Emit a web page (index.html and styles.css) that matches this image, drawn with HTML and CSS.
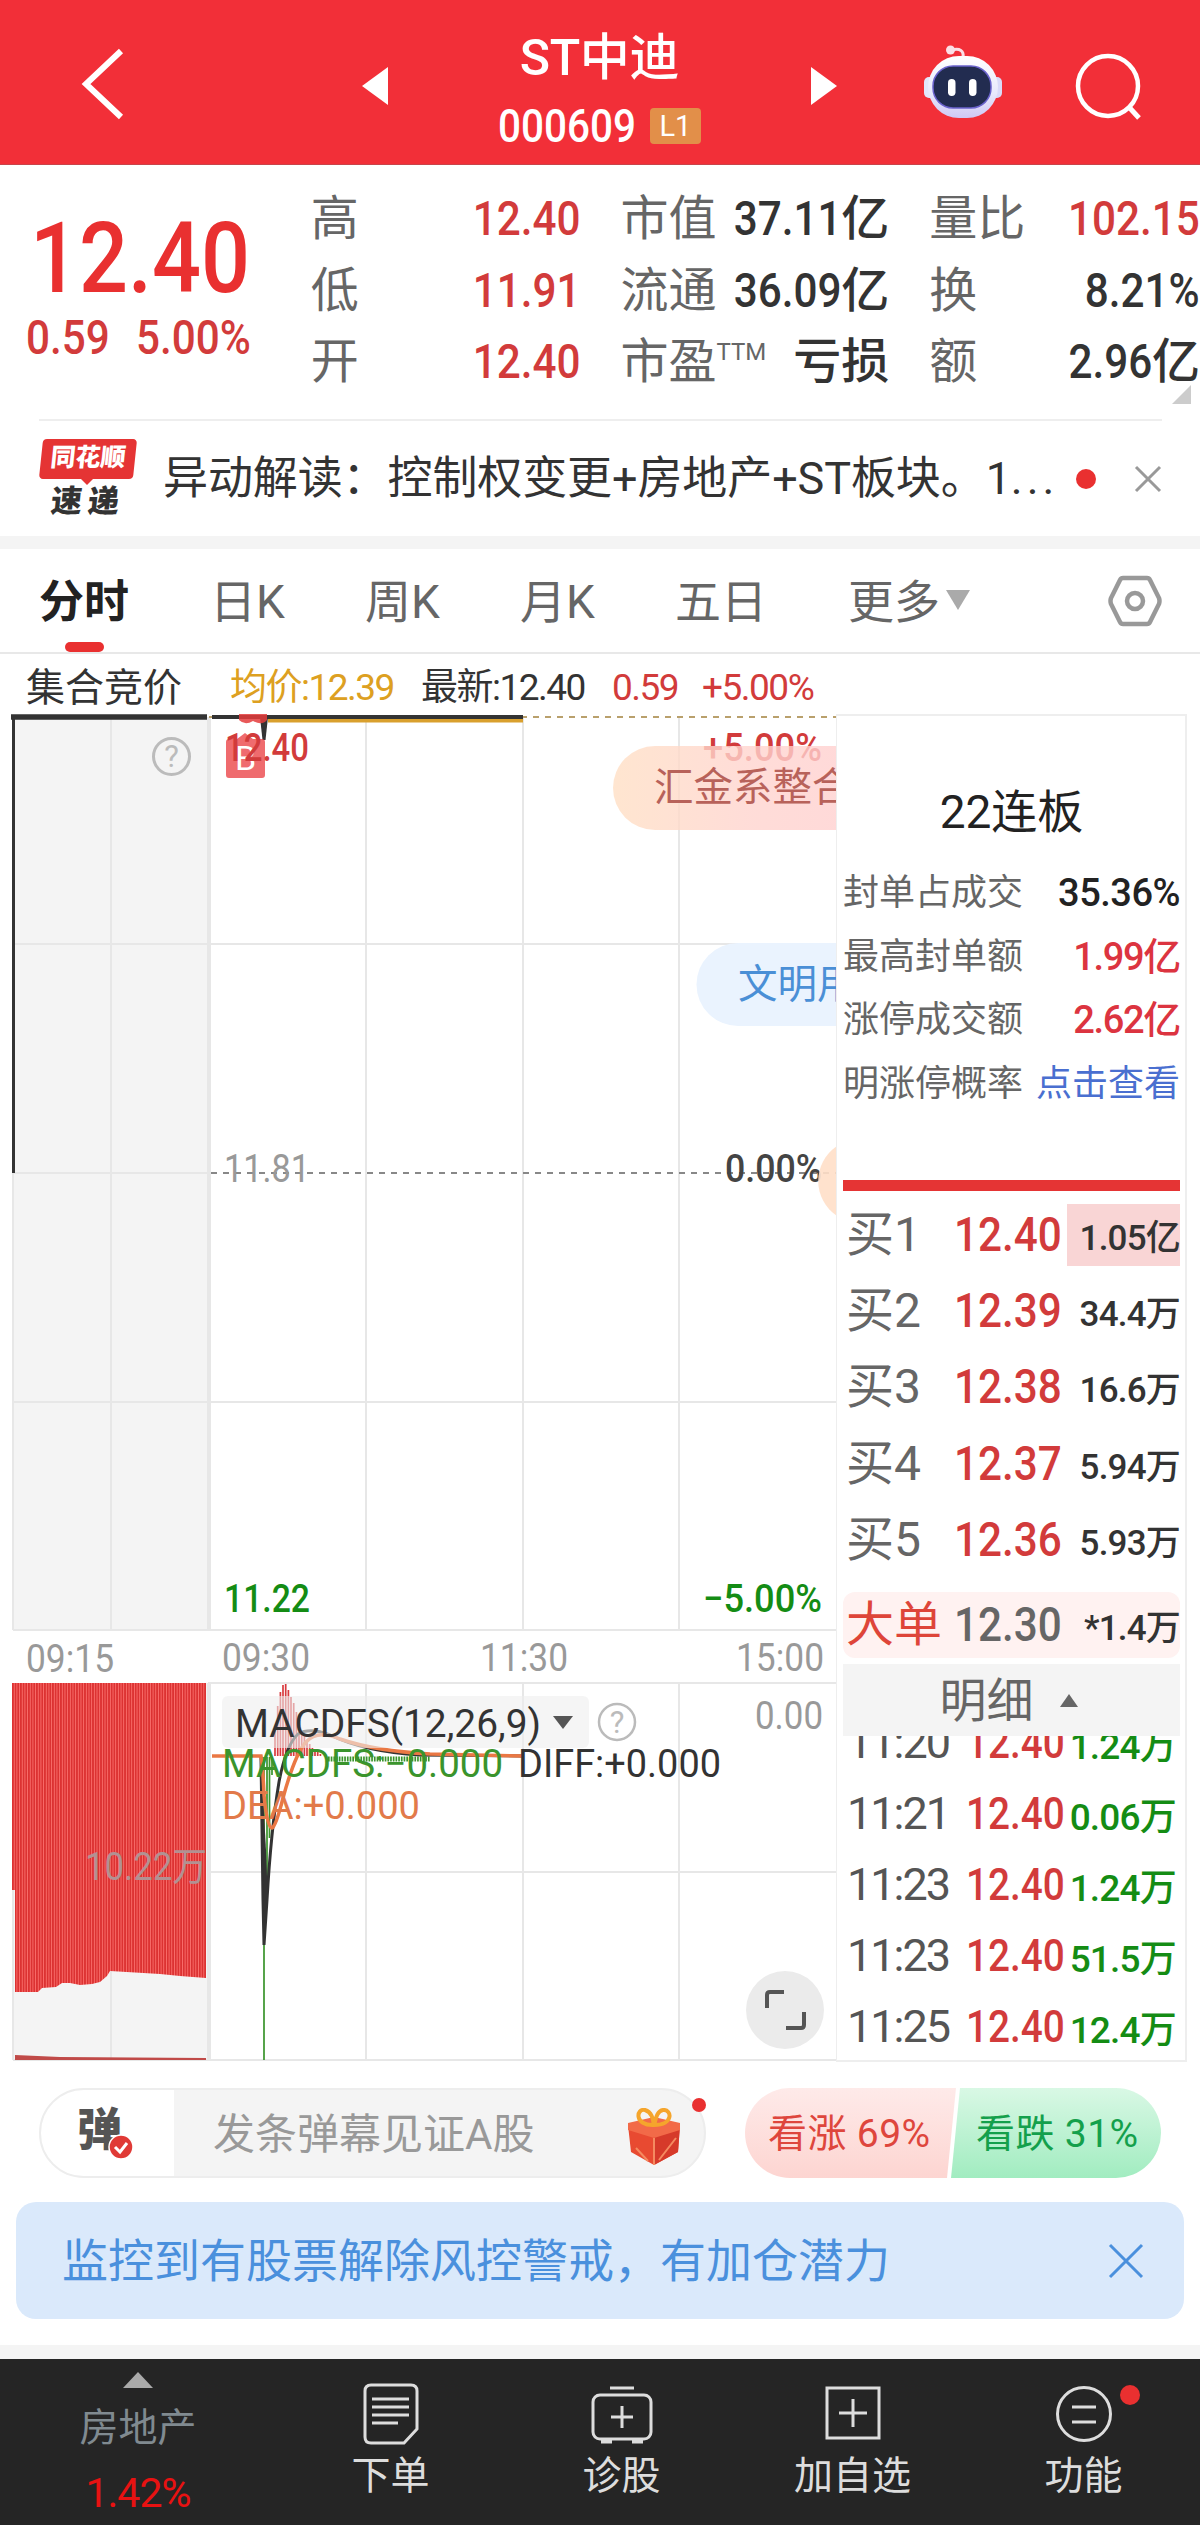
FILE: index.html
```
<!DOCTYPE html>
<html lang="zh-CN">
<head>
  <meta charset="UTF-8">
  <title>ST中迪 000609</title>
  <link rel="stylesheet" href="styles.css">
</head>
<body>
  <header class="top">
    <svg class="back" width="50" height="76" viewBox="0 0 50 76"><path d="M42 5 L7 38 L42 71" fill="none" stroke="#fff" stroke-width="6"/></svg>
    <svg class="prev" width="26" height="38" viewBox="0 0 26 38"><path d="M26 0 V38 L0 19Z" fill="#fff"/></svg>
    <div class="title">
      <div class="name">ST中迪</div>
      <div class="code"><span class="num">000609</span><span class="badge">L1</span></div>
    </div>
    <svg class="next" width="26" height="38" viewBox="0 0 26 38"><path d="M0 0 V38 L26 19Z" fill="#fff"/></svg>
    <svg class="robot" width="80" height="78" viewBox="0 0 80 78">
      <defs>
        <linearGradient id="head" x1="0" y1="0" x2="0" y2="1"><stop offset="0" stop-color="#fff"/><stop offset=".6" stop-color="#e8e9fb"/><stop offset="1" stop-color="#cfc8f5"/></linearGradient>
      </defs>
      <path d="M39 15 C40 9 36 6 28 8" fill="none" stroke="#fbdfe6" stroke-width="3"/>
      <circle cx="26.500" cy="8" r="4.500" fill="#fbdfe6"/>
      <rect x="0" y="35" width="12" height="21" rx="5" fill="#e2e6fb"/>
      <rect x="66" y="35" width="12" height="21" rx="5" fill="#d9dbf8"/>
      <rect x="4" y="14" width="70" height="62" rx="31" fill="url(#head)"/>
      <rect x="9" y="24" width="58" height="42" rx="20" fill="#222c50" stroke="#6a62cc" stroke-width="1.500"/>
      <rect x="24" y="37" width="7.500" height="17" rx="3.700" fill="#fff"/>
      <rect x="45" y="37" width="7.500" height="17" rx="3.700" fill="#fff"/>
    </svg>
    <svg class="search" width="70" height="70" viewBox="0 0 70 70"><circle cx="34" cy="34" r="30" fill="none" stroke="#fff" stroke-width="4.500"/><path d="M54 54 L65 66" stroke="#fff" stroke-width="5"/></svg>
  </header>

  <section class="quote">
    <div class="price">
      <div class="last num">12.40</div>
      <div class="change"><span class="num">0.59</span><span class="num">5.00%</span></div>
    </div>
    <dl class="stats col1">
      <div><dt>高</dt><dd class="up num">12.40</dd></div>
      <div><dt>低</dt><dd class="up num">11.91</dd></div>
      <div><dt>开</dt><dd class="up num">12.40</dd></div>
    </dl>
    <dl class="stats col2">
      <div><dt>市值</dt><dd><span class="num">37.11</span>亿</dd></div>
      <div><dt>流通</dt><dd><span class="num">36.09</span>亿</dd></div>
      <div><dt>市盈<sup>TTM</sup></dt><dd>亏损</dd></div>
    </dl>
    <dl class="stats col3">
      <div><dt>量比</dt><dd class="up num">102.15</dd></div>
      <div><dt>换</dt><dd class="num">8.21%</dd></div>
      <div><dt>额</dt><dd><span class="num">2.96</span>亿</dd></div>
    </dl>
    <i class="corner"></i>
  </section>

  <section class="news">
    <div class="logo"><b>同花顺</b><i>速递</i></div>
    <p>异动解读：控制权变更+房地产+ST板块。1<span>...</span></p>
    <span class="dot"></span>
    <svg width="28" height="28" viewBox="0 0 28 28"><path d="M2 2 L26 26 M26 2 L2 26" stroke="#999" stroke-width="3"/></svg>
  </section>

  <nav class="tabs">
    <a class="active">分时</a>
    <a>日K</a>
    <a>周K</a>
    <a>月K</a>
    <a>五日</a>
    <a>更多<i class="caret"></i></a>
    <svg width="54" height="52" viewBox="0 0 54 52"><path d="M15 3 H39 Q41 3 42 5 L51 23 Q52 26 51 29 L42 47 Q41 49 39 49 H15 Q13 49 12 47 L3 29 Q2 26 3 23 L12 5 Q13 3 15 3Z" fill="none" stroke="#999" stroke-width="4.500"/><circle cx="27" cy="26" r="8" fill="none" stroke="#999" stroke-width="4.500"/></svg>
  </nav>

  <div class="legend">
    <span class="auction">集合竞价</span>
    <span class="avg">均价:12.39</span>
    <span class="now">最新:12.40</span>
    <span class="up diff">0.59</span>
    <span class="up">+5.00%</span>
  </div>

  <main class="board">
    <svg class="chart" width="836" height="1350" viewBox="0 714 836 1350">
      <defs>
        <pattern id="bars" x="12" y="0" width="2.67" height="20" patternUnits="userSpaceOnUse"><rect width="2.67" height="20" fill="#dc3232"/><rect x="1.900" width=".8" height="20" fill="#ff7a76"/></pattern>
        <linearGradient id="pill"><stop offset="0" stop-color="#ffdfc4"/><stop offset=".6" stop-color="#ffd4ce"/><stop offset="1" stop-color="#ffd0cf"/></linearGradient>
      </defs>

      <!-- price area -->
      <rect x="13" y="717" width="195" height="913" fill="#f4f4f4"/>
      <rect x="13" y="1683" width="195" height="377" fill="#f4f4f4"/>
      <g stroke="#e7e7e7" stroke-width="2" fill="none">
        <path d="M13 1173 V1630 M111 717 V1630 M366 717 V1630 M523 717 V1630 M679 717 V1630"/>
        <path d="M13 944 H837 M13 1402 H837 M13 1630 H837 M13 1173 H208"/>
        <path d="M13 1683 V2060 M111 1683 V2060 M366 1683 V2060 M523 1683 V2060 M679 1683 V2060"/>
        <path d="M208 1683 H837 M208 1872 H837 M13 2060 H837"/>
        <path d="M209 717 V1630 M209 1683 V2060" stroke-width="4"/>
      </g>
      <path d="M209 717 H837" stroke="#b9a06c" stroke-width="2" stroke-dasharray="6 6"/>
      <path d="M211 1173 H837" stroke="#888" stroke-width="2" stroke-dasharray="6 6"/>
      <path d="M13.500 1173 V718" stroke="#333" stroke-width="3"/>
      <path d="M11 717 H207" stroke="#333" stroke-width="5.500"/>
      <path d="M268 720.5 H523" stroke="#d9a02e" stroke-width="4"/>
      <path d="M212 717 H523" stroke="#333" stroke-width="4"/>
      <path d="M260 717 H268 L265.500 740 H262.500Z" fill="#333"/>
      <path d="M239 714 H267 V720 Q262 726 253 721 Q245 726 239 720Z" fill="#e43c3c" opacity=".85"/>
      <g opacity=".75"><path d="M229 739 H237 L245 733 L253 739 H262 Q265 739 265 742 V775 Q265 778 262 778 H229 Q226 778 226 775 V742 Q226 739 229 739Z" fill="#ea3a3e"/><text class="bmark" x="235" y="770">B</text></g>
      <text class="lab up" x="225" y="761" textLength="84" lengthAdjust="spacingAndGlyphs">12.40</text>
      <text class="lab up" x="703" y="761" textLength="119" lengthAdjust="spacingAndGlyphs">+5.00%</text>
      <g fill="none" stroke="#bbb" stroke-width="3"><circle cx="171.500" cy="756.500" r="18"/></g>
      <text class="q" x="171.500" y="767">?</text>
      <text class="lab gray" x="224" y="1182" textLength="86" lengthAdjust="spacingAndGlyphs">11.81</text>
      <text class="lab dark" x="725" y="1182" textLength="97" lengthAdjust="spacingAndGlyphs">0.00%</text>
      <text class="lab down" x="224" y="1612" textLength="86" lengthAdjust="spacingAndGlyphs">11.22</text>
      <text class="lab down" x="703" y="1612" textLength="119" lengthAdjust="spacingAndGlyphs">−5.00%</text>

      <!-- floating comments -->
      <path d="M837 746 H655 A42 42 0 0 0 655 830 H837Z" fill="url(#pill)" opacity=".8"/>
      <text class="bullet" x="654" y="801" fill="#b8625a">汇金系整合</text>
      <path d="M837 943 H738 A41.500 41.500 0 0 0 738 1026 H837Z" fill="#eaf3fe"/>
      <text class="bullet" x="738" y="998" fill="#4a8fd6">文明用</text>
      <path d="M837 1146 A42 42 0 0 0 837 1216Z" fill="#ffdfc8" opacity=".9"/>

      <!-- time axis -->
      <text class="lab gray" x="26" y="1672" textLength="88" lengthAdjust="spacingAndGlyphs">09:15</text>
      <text class="lab gray" x="222" y="1671" textLength="88" lengthAdjust="spacingAndGlyphs">09:30</text>
      <text class="lab gray" x="480" y="1671" textLength="88" lengthAdjust="spacingAndGlyphs">11:30</text>
      <text class="lab gray" x="736" y="1671" textLength="88" lengthAdjust="spacingAndGlyphs">15:00</text>

      <!-- auction volume -->
      <path d="M12 1683 H206 V1978 L180 1976 L160 1974 L110 1971 L107 1976 L100 1982 L92 1984 L80 1985 L70 1983 L62 1983 L56 1987 L42 1988 L38 1992 H15 V1890 H12Z" fill="url(#bars)"/>
      <path d="M15 2055 L60 2057 L206 2058 V2060 H15Z" fill="#c04a48"/>
      <text class="lab vol" x="85" y="1880" textLength="122" lengthAdjust="spacingAndGlyphs">10.22万</text>

      <!-- MACD -->
      <g fill="none">
        <path d="M275 1756 V1729 M277.700 1756 V1706 M280.400 1756 V1692 M283 1756 V1685 M285.700 1756 V1684 M288.400 1756 V1690 M291 1756 V1697 M293.700 1756 V1703 M296.400 1756 V1712 M299 1756 V1722 M301.700 1756 V1732 M304.400 1756 V1736 M307 1756 V1740 M309.700 1756 V1744 M312.400 1756 V1748 M315 1756 V1750 M317.700 1756 V1752 M320.400 1756 V1754" stroke="#d83a3e" stroke-width="1.700"/>
        <path d="M328 1759 H430" stroke="#3a942c" stroke-width="5" stroke-dasharray="1.700 1"/>
        <path d="M262 1757 V1850 M264 1757 V2060 M267 1757 V1900 M269.500 1757 V1838 M272 1757 V1775" stroke="#3a942c" stroke-width="1.700"/>
        <path d="M261 1757 L263 1900 L264 1945 L267 1900 Q271 1830 279 1782 Q286 1745 298 1734 Q310 1727 330 1735 Q365 1752 420 1755 L523 1756" stroke="#333" stroke-width="3"/>
        <path d="M261 1760 L264.500 1940 L267.500 1890 L266 1850Z" fill="#333"/>
        <path d="M212 1756 H261 Q263 1770 264 1795 Q267 1828 272 1828 Q276 1826 283 1798 Q295 1754 306 1742 Q317 1729 340 1739 Q375 1751 430 1754 L523 1756" stroke="#ea7844" stroke-width="3.500"/>
      </g>
      <rect x="222" y="1696" width="367" height="52" rx="6" fill="#eee" opacity=".6"/>
      <text class="lab dark1" x="235" y="1737" textLength="306" lengthAdjust="spacingAndGlyphs">MACDFS(12,26,9)</text>
      <path d="M553 1716 H573 L563 1729Z" fill="#555"/>
      <circle cx="617" cy="1722" r="18" fill="none" stroke="#bbb" stroke-width="2.500"/>
      <text class="q" x="617" y="1733">?</text>
      <text class="lab gray" x="755" y="1729" textLength="68" lengthAdjust="spacingAndGlyphs">0.00</text>
      <text class="lab macd" x="222" y="1777" textLength="281" lengthAdjust="spacingAndGlyphs">MACDFS:−0.000</text>
      <text class="lab dark1" x="518" y="1777" textLength="203" lengthAdjust="spacingAndGlyphs">DIFF:+0.000</text>
      <text class="lab dea" x="222" y="1819" textLength="198" lengthAdjust="spacingAndGlyphs">DEA:+0.000</text>
      <circle cx="785" cy="2010" r="39" fill="#ebebeb"/>
      <path d="M767 2008 V1995 Q767 1992 770 1992 H784 M804 2012 V2025 Q804 2028 801 2028 H786" fill="none" stroke="#555" stroke-width="4"/>
    </svg>

    <aside class="side">
      <h2>22连板</h2>
      <ul class="limit">
        <li><span>封单占成交</span><b>35.36%</b></li>
        <li><span>最高封单额</span><b class="hot">1.99亿</b></li>
        <li><span>涨停成交额</span><b class="hot">2.62亿</b></li>
        <li><span>明涨停概率</span><a>点击查看</a></li>
      </ul>
      <div class="redbar"></div>
      <ul class="bids">
        <li><span>买1</span><b class="num">12.40</b><em class="hl">1.05亿</em></li>
        <li><span>买2</span><b class="num">12.39</b><em>34.4万</em></li>
        <li><span>买3</span><b class="num">12.38</b><em>16.6万</em></li>
        <li><span>买4</span><b class="num">12.37</b><em>5.94万</em></li>
        <li><span>买5</span><b class="num">12.36</b><em>5.93万</em></li>
      </ul>
      <div class="big"><span>大单</span><b class="num">12.30</b><em>*1.4万</em></div>
      <div class="detail-head">明细<i></i></div>
      <ul class="ticks">
        <li><span>11:20</span><b class="num">12.40</b><em>1.24万</em></li>
        <li><span>11:21</span><b class="num">12.40</b><em>0.06万</em></li>
        <li><span>11:23</span><b class="num">12.40</b><em>1.24万</em></li>
        <li><span>11:23</span><b class="num">12.40</b><em>51.5万</em></li>
        <li><span>11:25</span><b class="num">12.40</b><em>12.4万</em></li>
      </ul>
    </aside>
  </main>

  <section class="chat">
    <div class="input">
      <div class="toggle">弹<svg width="26" height="26" viewBox="0 0 26 26"><circle cx="13" cy="13" r="12" fill="#e03a36" stroke="#fff" stroke-width="1.500"/><path d="M7 13 L12 18 L19 9" fill="none" stroke="#fff" stroke-width="3"/></svg></div>
      <div class="hint">发条弹幕见证A股</div>
      <svg class="gift" width="56" height="58" viewBox="0 0 56 58">
        <path d="M2 17 L28 22 L54 17 L52 44 L28 57 L5 44Z" fill="#e84a31"/>
        <path d="M28 22 L54 17 L52 44 L28 57Z" fill="#d63a2a"/>
        <path d="M2 15 L28 9 L54 15 L54 22 L28 30 L2 22Z" fill="#f26a48"/>
        <path d="M28 30 V57 M10 40 L22 53 M33 52 L50 30" stroke="#f58a60" stroke-width="2" fill="none"/>
        <path d="M28 17 C8 18 10 0 19 2 C26 4 27 11 28 17 C30 10 31 3 37 2 C46 1 48 17 28 17Z" fill="none" stroke="#f5a52c" stroke-width="4"/>
      </svg>
      <span class="dot"></span>
    </div>
    <div class="vote">
      <div class="bull">看涨 69%</div>
      <div class="bear">看跌 31%</div>
    </div>
  </section>

  <section class="notice">
    <p>监控到有股票解除风控警戒，有加仓潜力</p>
    <svg width="36" height="36" viewBox="0 0 36 36"><path d="M2 2 L34 34 M34 2 L2 34" stroke="#4a90dd" stroke-width="3"/></svg>
  </section>

  <footer class="bottom">
    <div class="sector"><i></i><span>房地产</span><b>1.42%</b></div>
    <a><svg width="60" height="62" viewBox="0 0 60 62"><path d="M10 2 H50 Q56 2 56 8 V46 L43 60 H10 Q4 60 4 54 V8 Q4 2 10 2Z M11 16 H48 M11 24 H48 M11 32 H48 M11 40 H37"/></svg>下单</a>
    <a><svg width="64" height="62" viewBox="0 0 64 62"><rect x="3" y="12" width="58" height="44" rx="7"/><path d="M20 5 H44 M32 23 V45 M21 34 H43"/><path d="M11 58 H22 M42 58 H53" stroke-width="5"/></svg>诊股</a>
    <a><svg width="60" height="62" viewBox="0 0 60 62"><rect x="4" y="5" width="52" height="50"/><path d="M30 16 V44 M16 30 H44"/></svg>加自选</a>
    <a><svg width="60" height="62" viewBox="0 0 60 62"><circle cx="30" cy="31" r="26.500"/><path d="M18 24 H42 M18 39 H42"/></svg>功能<span class="dot"></span></a>
  </footer>
</body>
</html>
```
FILE: styles.css
```
:root {
  --up: #d23b3b;
  --down: #148c14;
  --text: #333;
  --sub: #666;
}

* {
  box-sizing: border-box;
}

body {
  margin: 0;
  width: 1200px;
  height: 2525px;
  overflow: hidden;
  background: #fff;
  color: var(--text);
  font-family: Roboto, "Noto Sans CJK SC", sans-serif;
  line-height: 1;
}

ul, dl, dd, p, h2 {
  margin: 0;
  padding: 0;
  list-style: none;
}

i, em {
  font-style: normal;
}

.up {
  color: var(--up);
  fill: var(--up);
}

/* condensed digits */
.num {
  display: inline-block;
  transform: scaleX(.88);
  transform-origin: left center;
}

.dot {
  width: 20px;
  height: 20px;
  border-radius: 50%;
  background: #e93030;
}

/* header */
.top {
  display: flex;
  align-items: center;
  height: 165px;
  padding-top: 8px;
  background: #f22f38;
  border-bottom: 1px solid #c9444a;
  color: #fff;
}

.back {
  margin: -4px 0 0 79px;
}

.prev {
  margin-left: 233px;
}

.title {
  width: 423px;
  text-align: center;
}

.name {
  font-size: 50px;
  font-weight: 500;
  line-height: 60px;
  letter-spacing: -.3px;
  margin-top: 3px;
}

.code {
  display: flex;
  justify-content: center;
  align-items: center;
  gap: 14px;
  height: 60px;
  padding-top: 16px;
  font-size: 46px;
  font-weight: 500;
}

.code .num {
  margin-right: -19px;
}

.badge {
  width: 51px;
  height: 36px;
  border-radius: 4px;
  background: #e28f49;
  font-size: 29px;
  font-weight: 400;
  line-height: 37px;
  letter-spacing: 0;
}

.robot {
  margin: -11px 0 0 87px;
}

.search {
  margin: 2px 0 0 70px;
}

/* quote */
.quote {
  position: relative;
  display: flex;
  height: 254px;
  padding-top: 18px;
}

.price {
  width: 311px;
  padding: 32px 0 0 30px;
  color: #e93030;
}

.last {
  font-size: 98px;
  font-weight: 500;
  line-height: 88px;
}

.change {
  display: flex;
  gap: 15px;
  margin: 10px 0 0 -4px;
  font-size: 48px;
  font-weight: 500;
  line-height: 50px;
  color: var(--up);
}

.stats > div {
  display: flex;
  justify-content: space-between;
  height: 71.5px;
  line-height: 71px;
  white-space: nowrap;
}

.stats dt {
  font-size: 48px;
  color: var(--sub);
}

.stats dd {
  font-size: 48px;
  font-weight: 500;
}

.stats dd.num,
.stats dd .num {
  transform-origin: right center;
}

.stats sup {
  font-size: 24px;
  line-height: 1;
  vertical-align: 18px;
}

.col1 {
  width: 270px;
}

.col2 {
  width: 269px;
  margin-left: 40px;
}

.col3 {
  width: 271px;
  margin-left: 40px;
}

.corner {
  position: absolute;
  right: 9px;
  bottom: 15px;
  border-left: 19px solid transparent;
  border-bottom: 19px solid #ccc;
}

/* news */
.news {
  display: flex;
  align-items: center;
  height: 117px;
  margin: 0 38px 0 39px;
  border-top: 2px solid #eee;
}

.logo {
  position: relative;
  width: 98px;
  height: 80px;
  text-align: center;
}

.logo b,
.logo i {
  display: block;
  transform: skewX(-6deg);
  font-weight: 900;
}

.logo b {
  width: 94px;
  margin-left: 2px;
  height: 40px;
  border-radius: 4px;
  background: #e53434;
  color: #fff;
  font-size: 25px;
  line-height: 38px;
}

.logo::after {
  content: "";
  position: absolute;
  left: 41px;
  top: 39px;
  border: 7px solid transparent;
  border-top-color: #e53434;
  border-bottom: 0;
}

.logo i {
  margin-top: 7px;
  font-size: 31px;
  line-height: 31px;
  letter-spacing: 6px;
}

.news p {
  width: 900px;
  margin-left: 26px;
  font-size: 45px;
  line-height: 60px;
  letter-spacing: -.1px;
  white-space: nowrap;
}

.news p span {
  letter-spacing: 4px;
}

.news .dot {
  margin-left: 13px;
}

.news svg {
  margin-left: 38px;
}

/* tabs */
.tabs {
  display: flex;
  align-items: center;
  height: 118px;
  padding: 0 38px 0 39px;
  border-top: 13px solid #f4f4f4;
  border-bottom: 2px solid #e8e8e8;
  font-size: 46px;
  color: var(--sub);
}

.tabs a {
  position: relative;
  width: 155px;
  line-height: 107px;
  height: 103px;
  white-space: nowrap;
}

.tabs a:first-child {
  width: 171px;
}

.tabs a:nth-child(5) {
  width: 173px;
}

.tabs a:nth-child(6) {
  width: 260px;
}

.tabs .active {
  font-weight: 700;
  font-size: 45px;
  color: #222;
}

.tabs .active::after {
  content: "";
  position: absolute;
  left: 26px;
  bottom: 0;
  width: 39px;
  height: 10px;
  border-radius: 5px;
  background: #e93030;
}

.caret {
  display: inline-block;
  margin-left: 6px;
  border: 12.5px solid transparent;
  border-top: 20px solid #aaa;
  border-bottom: 0;
  vertical-align: 8px;
}

.legend {
  display: flex;
  height: 60px;
  padding-left: 26px;
  font-size: 37px;
  line-height: 68px;
  letter-spacing: -1.5px;
  white-space: nowrap;
}

.auction {
  width: 204px;
  font-size: 39px;
  letter-spacing: 0;
}

.avg {
  width: 191px;
  color: #dda021;
}

.now {
  width: 191px;
}

.diff {
  width: 90px;
}

/* board */
.board {
  display: flex;
  height: 1350px;
}

.chart {
  display: block;
  flex: none;
}

.lab {
  font-size: 39px;
}

.lab.up,
.lab.dark {
  font-weight: 500;
}

.gray {
  fill: #999;
}

.dark {
  fill: #444;
}

.dark1 {
  fill: #333;
}

.down {
  fill: var(--down);
  font-weight: 500;
}

.vol {
  fill: #b29192;
}

.macd {
  fill: #3a942c;
}

.dea {
  fill: #e27a4a;
}

.bmark {
  fill: #fff;
  font-size: 34px;
}

.q {
  fill: #bbb;
  font-size: 31px;
  text-anchor: middle;
}

.bullet {
  font-size: 39.5px;
}

.side {
  width: 351px;
  height: 1348px;
  padding: 0 5px 0 6px;
  border: 2px solid #eee;
  border-left-width: 1px;
  overflow: hidden;
}

.side h2 {
  padding: 66px 0 33px;
  font-size: 46px;
  line-height: 60px;
  font-weight: 400;
  text-align: center;
  color: #222;
}

.limit {
  height: 305px;
}

.limit li {
  display: flex;
  justify-content: space-between;
  height: 63.7px;
  font-size: 36px;
  line-height: 37px;
  white-space: nowrap;
}

.limit span {
  color: var(--sub);
}

.limit b {
  font-size: 38px;
  font-weight: 500;
  letter-spacing: -.5px;
  color: #222;
}

.limit .hot {
  letter-spacing: -1.3px;
  color: #dc3440;
}

.limit a {
  color: #4a6fd0;
}

.redbar {
  height: 11px;
  background: #e53434;
}

.bids {
  height: 401px;
  padding-top: 6px;
}

.side .bids li,
.big,
.ticks li {
  display: grid;
  grid-template-columns: 108px 113px 1fr;
  align-items: center;
  height: 76.2px;
  padding-left: 3px;
  font-size: 48px;
  white-space: nowrap;
}

.bids span {
  color: var(--sub);
}

.bids b,
.ticks b {
  font-weight: 500;
  color: var(--up);
}

.bids em,
.big em,
.ticks em {
  height: 62px;
  padding-top: 4px;
  font-size: 35px;
  line-height: 62px;
  letter-spacing: -.8px;
  font-weight: 500;
  text-align: right;
}

.bids .hl {
  background: #f9d5d5;
}

.side .big {
  height: 66px;
  margin-bottom: 6px;
  border-radius: 12px;
  background: #fff2f1;
}

.big span {
  color: #de4539;
}

.big b {
  font-weight: 500;
  color: var(--sub);
}

.detail-head {
  display: flex;
  justify-content: center;
  align-items: center;
  gap: 26px;
  height: 72px;
  padding-right: 6px;
  background: #f4f4f4;
  font-size: 47px;
  color: var(--sub);
}

.detail-head i {
  border: 9.5px solid transparent;
  border-bottom: 13px solid #666;
  border-top: 0;
}

.ticks {
  height: 326px;
  overflow: hidden;
}

.ticks li {
  height: 71px;
  grid-template-columns: 119px 92px 1fr;
  font-size: 45px;
  padding: 0 4px 0 4px;
  position: relative;
  top: -29px;
}

.ticks span {
  color: #555;
  letter-spacing: -2px;
}

.ticks .num {
  transform: scaleX(.86);
}

.ticks em {
  font-size: 37px;
  color: var(--down);
}

/* chat */
.chat {
  display: flex;
  justify-content: space-between;
  height: 90px;
  margin: 24px 39px 0 39px;
}

.input {
  position: relative;
  display: flex;
  align-items: center;
  width: 667px;
  border: 2px solid #ededed;
  border-radius: 45px;
  background: linear-gradient(90deg, #fff 133px, #f4f4f4 133px);
}

.toggle {
  position: relative;
  width: 134px;
  padding-left: 36px;
  font-size: 45px;
  font-weight: 900;
  color: #555;
  height: 58px;
  line-height: 54px;
}

.toggle svg {
  position: absolute;
  left: 67px;
  top: 30px;
}

.hint {
  width: 413px;
  padding: 4px 0 0 38px;
  font-size: 42px;
  color: #999;
}

.gift {
  margin: 8px 0 0 38px;
}

.input .dot {
  position: absolute;
  right: -2px;
  top: 8px;
  width: 14px;
  height: 14px;
}

.vote {
  display: flex;
  width: 416px;
  border-radius: 45px;
  overflow: hidden;
  font-size: 39px;
  line-height: 92px;
  letter-spacing: .4px;
  white-space: nowrap;
}

.bull {
  width: 211px;
  padding-left: 23px;
  background: linear-gradient(#feeae9, #fdd5d1);
  clip-path: polygon(0 0, 100% 0, calc(100% - 9px) 100%, 0 100%);
  color: #de463d;
}

.bear {
  width: 210px;
  margin-left: -5px;
  padding-left: 25px;
  background: linear-gradient(#d9f8e5, #a1ecc0);
  clip-path: polygon(9px 0, 100% 0, 100% 100%, 0 100%);
  color: #14a04c;
}

.notice {
  display: flex;
  justify-content: space-between;
  align-items: center;
  height: 117px;
  margin: 24px 16px 26px;
  padding: 0 40px 0 46px;
  border-radius: 20px;
  background: #dae9fb;
  font-size: 46px;
  color: #4a90dd;
}

/* bottom bar */
.bottom {
  display: flex;
  height: 180px;
  padding-left: 22px;
  border-top: 14px solid #f4f4f4;
  background: #252525;
  color: #ddd;
  font-size: 39px;
}

.bottom > * {
  position: relative;
  display: flex;
  flex-direction: column;
  align-items: center;
  width: 231px;
}

.bottom .sector {
  width: 232px;
  padding: 13px 0 0;
  margin-right: 21px;
}

.sector i {
  border: 15px solid transparent;
  border-bottom: 16px solid #aaa;
  border-top: 0;
}

.sector span {
  margin-top: 21px;
  color: #808a90;
}

.sector b {
  margin-top: 25px;
  font-weight: 400;
  font-size: 41px;
  letter-spacing: -1px;
  color: #e81212;
}

.bottom a {
  padding-top: 24px;
}

.bottom svg {
  margin-bottom: 12px;
  fill: none;
  stroke: #ddd;
  stroke-width: 3;
}

.bottom .dot {
  position: absolute;
  left: 152px;
  top: 26px;
}
```
